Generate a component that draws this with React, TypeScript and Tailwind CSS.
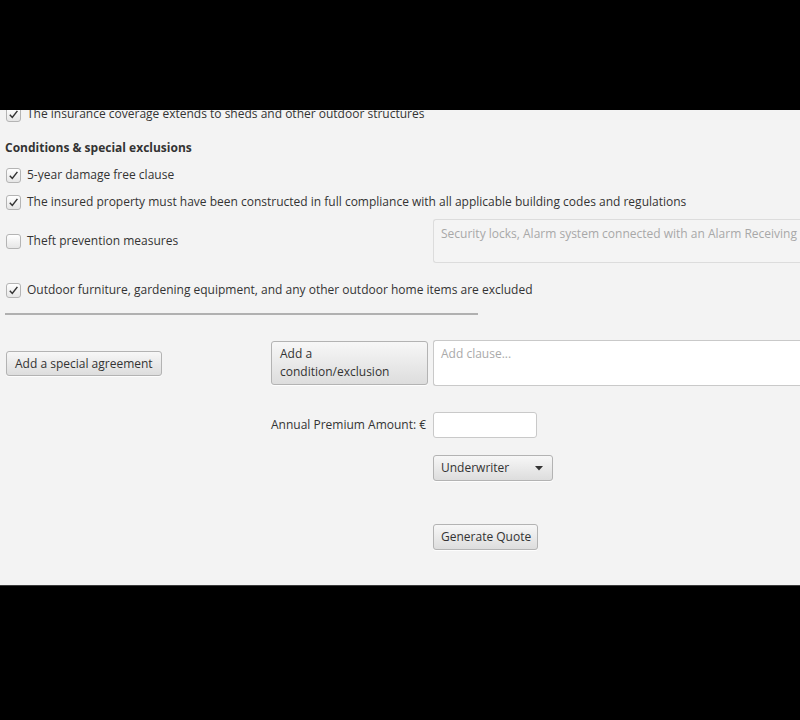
import React from "react";

const font = { fontFamily: '"Open Sans", "Noto Sans", sans-serif' };

function Check({ checked }: { checked: boolean }) {
  return (
    <div className="w-[15px] h-[15px] shrink-0 rounded-[3px] border border-[#b4b4b4] bg-gradient-to-b from-[#ffffff] to-[#e6e6e6] flex items-center justify-center">
      {checked && (
        <svg width="11" height="11" viewBox="0 0 11 11">
          <path d="M1.8 5.8 L4.3 8.4 L9.4 1.9" fill="none" stroke="#333" strokeWidth="1.5" />
        </svg>
      )}
    </div>
  );
}

function Row({ checked, label, className = "" }: { checked: boolean; label: string; className?: string }) {
  return (
    <div className={"flex items-center gap-[6px] pl-[6px] " + className}>
      <Check checked={checked} />
      <span className="text-[12px] text-[#333] whitespace-nowrap">{label}</span>
    </div>
  );
}

const btn =
  "rounded-[3px] border border-[#b3b3b3] bg-gradient-to-b from-[#f7f7f7] to-[#dddddd] text-[12px] text-[#333] whitespace-nowrap shadow-[0_1px_0_rgba(255,255,255,0.8)]";

export default function App() {
  return (
    <div className="w-[800px] h-[720px] bg-black flex flex-col" style={font}>
      <div className="h-[110px] shrink-0" />
      <div className="h-[476px] shrink-0 bg-[#f3f3f3] overflow-hidden border-b border-[#3a3a3a]">
        <div className="mt-[-8px] flex flex-col">
          <Row checked label="The insurance coverage extends to sheds and other outdoor structures" className="h-[24px]" />
          <div className="h-[18px] mt-[13px] pl-[5px] flex items-center text-[12px] font-bold text-[#333]">
            Conditions &amp; special exclusions
          </div>
          <Row checked label="5-year damage free clause" className="h-[24px] mt-[6px]" />
          <Row checked label="The insured property must have been constructed in full compliance with all applicable building codes and regulations" className="h-[24px] mt-[3px]" />
          <div className="h-[44px] mt-[5px] flex items-center">
            <div className="w-[433px] shrink-0">
              <Row checked={false} label="Theft prevention measures" />
            </div>
            <div className="h-[44px] flex-1 border border-[#dcdcdc] rounded-l-[3px] border-r-0 bg-[#f4f4f4] px-[7px] pt-[5px] text-[12px] text-[#a8a8a8] whitespace-nowrap overflow-hidden">
              Security locks, Alarm system connected with an Alarm Receiving Centre
            </div>
          </div>
          <Row checked label="Outdoor furniture, gardening equipment, and any other outdoor home items are excluded" className="h-[24px] mt-[15px]" />
          <div className="ml-[5px] w-[473px] h-[2px] bg-[#b0b0b0] mt-[11px]" />
          <div className="h-[46px] mt-[25px] flex items-center">
            <div className="w-[271px] shrink-0 pl-[6px]">
              <button className={btn + " h-[25px] w-[156px] text-left px-[8px]"}>Add a special agreement</button>
            </div>
            <button className={btn + " h-[44px] w-[157px] shrink-0 text-left px-[8px] leading-[18px] mr-[5px]"}>
              Add a<br />condition/exclusion
            </button>
            <div className="h-[46px] flex-1 bg-white border border-[#c9c9c9] border-r-0 rounded-l-[3px] px-[7px] pt-[4px] text-[12px] text-[#aaaaaa]">
              Add clause...
            </div>
          </div>
          <div className="h-[26px] mt-[26px] flex items-center">
            <div className="w-[433px] shrink-0 pl-[271px] text-[12px] text-[#333] whitespace-nowrap">Annual Premium Amount: €</div>
            <div className="w-[104px] h-[26px] bg-white border border-[#c9c9c9] rounded-[3px]" />
          </div>
          <div className="h-[26px] mt-[17px] pl-[433px] flex">
            <div className={btn + " w-[120px] h-[26px] flex items-center justify-between pl-[7px] pr-[9px]"}>
              <span>Underwriter</span>
              <svg width="8" height="5" viewBox="0 0 8 5">
                <path d="M0 0 H8 L4 4.5 Z" fill="#333" />
              </svg>
            </div>
          </div>
          <div className="h-[26px] mt-[43px] pl-[433px] flex">
            <button className={btn + " w-[105px] h-[26px] px-[7px] text-left"}>Generate Quote</button>
          </div>
        </div>
      </div>
      <div className="flex-1" />
    </div>
  );
}
